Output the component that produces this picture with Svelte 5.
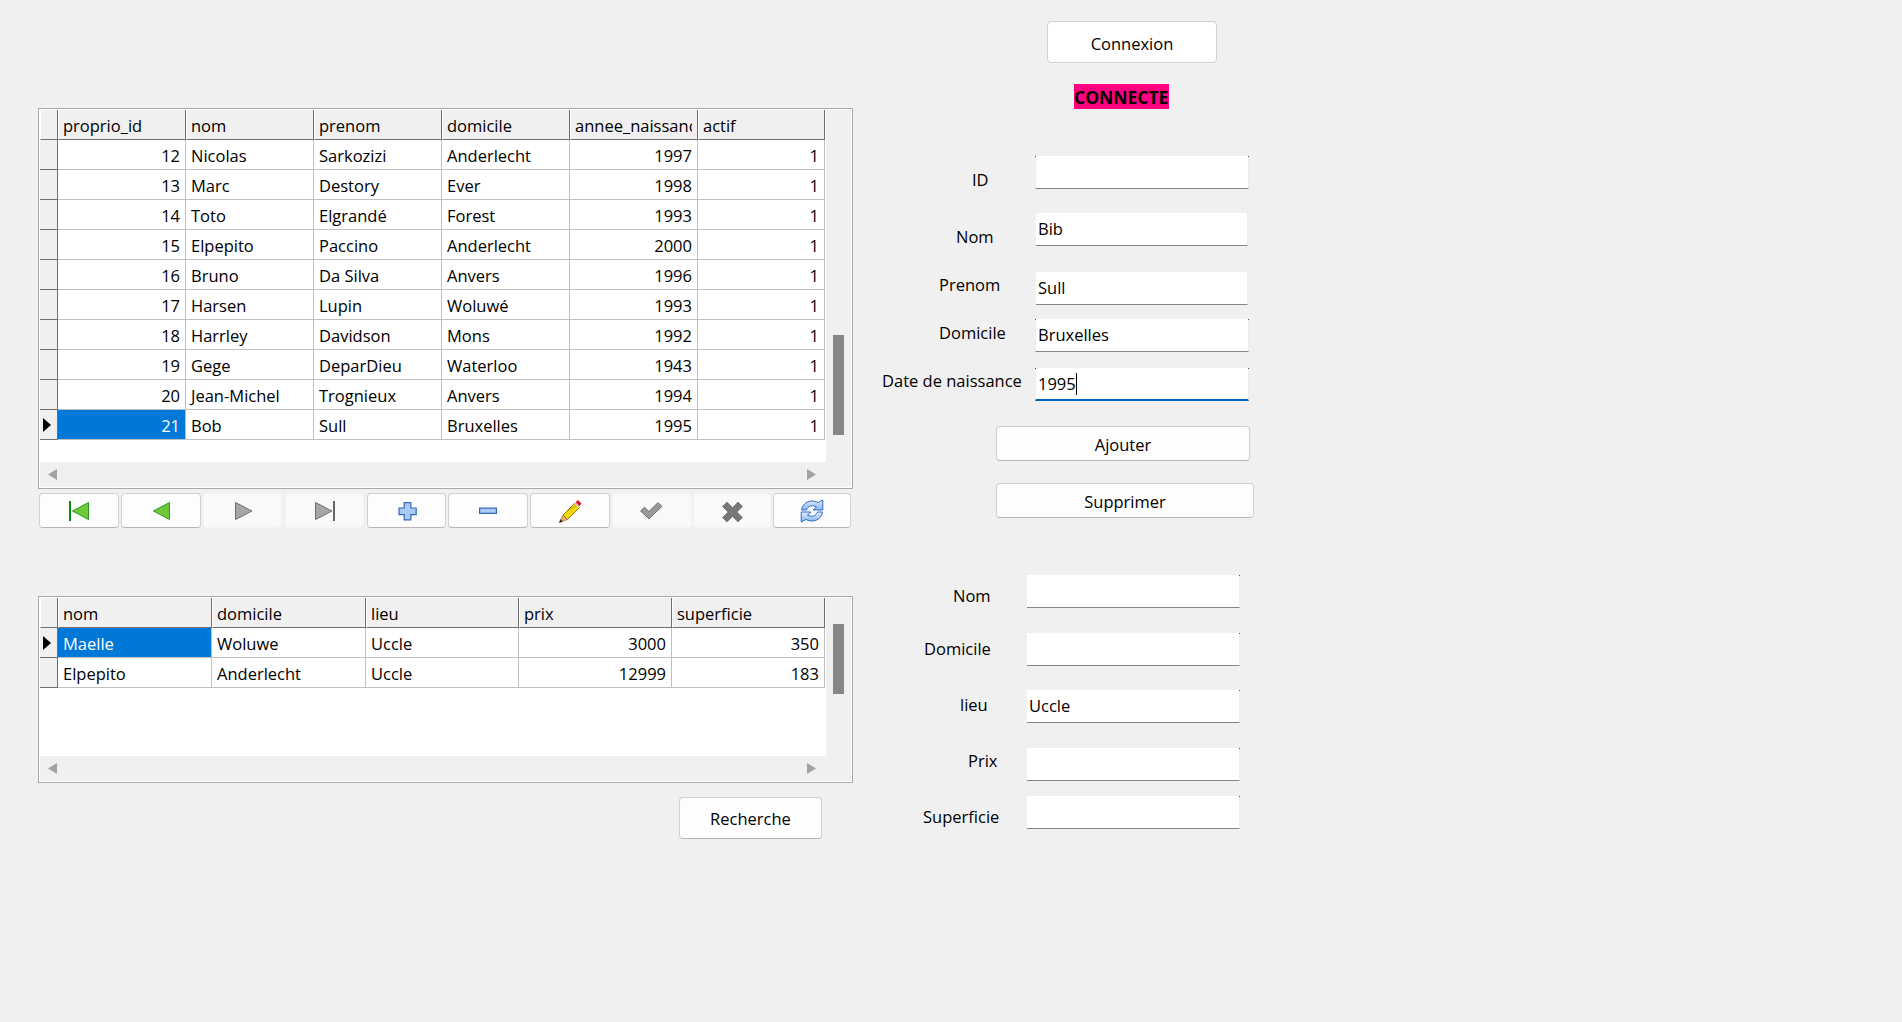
<script>
  const t1cols = [
    { name: 'proprio_id', num: true }, { name: 'nom' }, { name: 'prenom' }, { name: 'domicile' },
    { name: 'annee_naissance', num: true }, { name: 'actif', num: true }
  ];
  const t1rows = [
    [12,'Nicolas','Sarkozizi','Anderlecht',1997,1],
    [13,'Marc','Destory','Ever',1998,1],
    [14,'Toto','Elgrandé','Forest',1993,1],
    [15,'Elpepito','Paccino','Anderlecht',2000,1],
    [16,'Bruno','Da Silva','Anvers',1996,1],
    [17,'Harsen','Lupin','Woluwé',1993,1],
    [18,'Harrley','Davidson','Mons',1992,1],
    [19,'Gege','DeparDieu','Waterloo',1943,1],
    [20,'Jean-Michel','Trognieux','Anvers',1994,1],
    [21,'Bob','Sull','Bruxelles',1995,1]
  ];
  const t2cols = [
    { name: 'nom' }, { name: 'domicile' }, { name: 'lieu' }, { name: 'prix', num: true }, { name: 'superficie', num: true }
  ];
  const t2rows = [
    ['Maelle','Woluwe','Uccle',3000,350],
    ['Elpepito','Anderlecht','Uccle',12999,183]
  ];
  const tools = ['first','prev','next','last','add','remove','edit','ok','cancel','refresh'];
  const dim = new Set(['next','last','ok','cancel']);
  const form1 = [
    { key: 'id', label: 'ID', value: '' },
    { key: 'nom', label: 'Nom', value: 'Bib' },
    { key: 'prenom', label: 'Prenom', value: 'Sull' },
    { key: 'domicile', label: 'Domicile', value: 'Bruxelles' },
    { key: 'date', label: 'Date de naissance', value: '1995', focus: true }
  ];
  const form2 = [
    { key: 'nom2', label: 'Nom', value: '' },
    { key: 'dom2', label: 'Domicile', value: '' },
    { key: 'lieu', label: 'lieu', value: 'Uccle' },
    { key: 'prix', label: 'Prix', value: '' },
    { key: 'sup', label: 'Superficie', value: '' }
  ];
</script>

{#snippet arrowL()}<svg class="sa" viewBox="0 0 9 11"><path d="M9 0v11L0 5.500z" /></svg>{/snippet}
{#snippet arrowR()}<svg class="sa" viewBox="0 0 9 11"><path d="M0 0v11l9-5.500z" /></svg>{/snippet}

{#snippet grid(cols, rows, current, currentCol, cls)}
  <div class="frame {cls}">
    <div class="view">
      <table>
        <thead>
          <tr>
            <th class="corner"></th>
            {#each cols as c}<th><span class="clip">{c.name}</span></th>{/each}
          </tr>
        </thead>
        <tbody>
          {#each rows as r, i}
            <tr>
              <th class="rh">{#if i === current}<svg viewBox="0 0 8 14" class="cur"><path d="M0 0l8 7-8 7z" /></svg>{/if}</th>
              {#each r as v, j}
                <td class:num={cols[j].num} class:sel={i === current && j === currentCol}>{v}</td>
              {/each}
            </tr>
          {/each}
        </tbody>
      </table>
    </div>
    <div class="vbar"><div class="thumb"></div></div>
    <div class="hbar">{@render arrowL()}{@render arrowR()}</div>
  </div>
{/snippet}

{#snippet icon(n)}
  <svg viewBox="0 0 24 24" class="ti">
    {#if n === 'first'}
      <path d="M3 2v20" stroke="#0a8a0a" stroke-width="2" />
      <path d="M21.500 3.500v17L5.500 12z" fill="#6fc936" stroke="#2a9a1e" stroke-width="1" />
    {:else if n === 'prev'}
      <path d="M20.500 3.500v17L4.500 12z" fill="#6fc936" stroke="#2a9a1e" stroke-width="1" />
    {:else if n === 'next'}
      <path d="M4.500 3.500v17L21 12z" fill="#a6a6a6" stroke="#6e6e6e" stroke-width="1" />
    {:else if n === 'last'}
      <path d="M3.500 3.500v17L20 12z" fill="#a6a6a6" stroke="#6e6e6e" stroke-width="1" />
      <path d="M22 2v20" stroke="#666" stroke-width="2" />
    {:else if n === 'add'}
      <path d="M10.200 3.700h6.600v5.300h5.400v6.600h-5.400v5.300h-6.600v-5.300H5V9h5.200z" fill="#a9c9f7" stroke="#3a69b0" stroke-width="1.200" />
    {:else if n === 'remove'}
      <path d="M3.600 9.200h16.800v5.200H3.600z" fill="#a9c9f7" stroke="#3a69b0" stroke-width="1.200" />
    {:else if n === 'edit'}
      <path d="M5 16L17 4l4.500 4.500L9.500 20.500z" fill="#f5d90a" stroke="#8a6d10" stroke-width=".9" />
      <path d="M8 13l11.300-7" stroke="#c99a08" stroke-width="1" fill="none" />
      <path d="M5 16l4.500 4.500L1.500 23.500z" fill="#e8b060" stroke="#8a5a20" stroke-width=".6" />
      <path d="M1.200 23.800l1.100-3.600 2.500 2.400z" fill="#222" />
      <path d="M16.500 4.500l4.500 4.500 1.200-1.200-4.500-4.500z" fill="#d8d8d8" />
      <path d="M17.700 3.300l2.300-2.300 3.500 3.700-2.300 2.300z" fill="#e60d1c" />
    {:else if n === 'ok'}
      <path d="M.6 12l3.900-3.700 4.500 4.200 9-8.800 3.900 3.700L9 19.800z" fill="#9a9a9a" stroke="#6a6a6a" stroke-width="1" />
    {:else if n === 'cancel'}
      <path d="M7 3l5.500 5.500L18 3l4.500 4.500-5.500 5.500 5.500 5.500L18 23l-5.500-5.500L7 23l-4.500-4.500L8 13 2.500 7.500z" fill="#777" stroke="#666" stroke-width=".6" />
    {:else if n === 'refresh'}
      <defs>
        <linearGradient id="refreshFill" x1="0" y1="0" x2="0" y2="1">
          <stop offset="0" stop-color="#e2edfd" />
          <stop offset="1" stop-color="#86b4f4" />
        </linearGradient>
      </defs>
      <path d="M1.500 11C2.500 4 10-.5 18 3.500L22.800 1v10H13l3.500-3C12 5.500 8 7 6.500 11z" fill="url(#refreshFill)" stroke="#2f6cc8" stroke-width="1" />
      <path d="M22.500 13C21.500 20 14 24.500 6 20.500L1.200 23V13H11l-3.500 3c4.500 2.500 8.500 1 10-3z" fill="url(#refreshFill)" stroke="#2f6cc8" stroke-width="1" />
    {/if}
  </svg>
{/snippet}

{#snippet field(f)}
  <div class="row {f.key}">
    <span class="lab">{f.label}</span>
    <div class="input" class:focus={f.focus}>{f.value}{#if f.focus}<i class="caret"></i>{/if}</div>
  </div>
{/snippet}

<div class="page">
  <section class="left">
    {@render grid(t1cols, t1rows, 9, 0, 'g1')}
    <div class="tools">
      {#each tools as t}
        <button class="tool" class:dim={dim.has(t)} aria-label={t}>{@render icon(t)}</button>
      {/each}
    </div>
    {@render grid(t2cols, t2rows, 0, 0, 'g2')}
    <button class="btn search">Recherche</button>
  </section>

  <section class="right">
    <button class="btn connect">Connexion</button>
    <div class="status"><b>CONNECTE</b></div>
    <div class="form f1">
      {#each form1 as f}{@render field(f)}{/each}
    </div>
    <button class="btn ajout">Ajouter</button>
    <button class="btn suppr">Supprimer</button>
    <div class="form f2">
      {#each form2 as f}{@render field(f)}{/each}
    </div>
  </section>
</div>

<style>
  :global(body) { margin: 0; background: #f0f0f0; }
  .page {
    display: flex; width: 1902px; height: 1022px; overflow: hidden; background: #f0f0f0;
    font: 16.500px/22px "Open Sans", "Noto Sans", sans-serif; color: #000;
  }
  .left { width: 815px; margin-left: 38px; padding-top: 108px; display: flex; flex-direction: column; }
  .right { display: flex; flex-direction: column; align-items: flex-start; flex: 1; }

  /* data grids */
  .frame {
    position: relative; box-sizing: border-box; width: 815px; border: 1px solid #a9a9ad;
    outline: 1px solid #fff; outline-offset: -2px; background: #f0f0f0;
    display: grid; grid-template-columns: 786px 1fr; grid-template-rows: 1fr 25px; padding: 1px;
  }
  .g1 { height: 381px; }
  .g2 { height: 187px; margin-top: 68px; }
  .view { background: #fff; overflow: hidden; }
  table { border-collapse: separate; border-spacing: 0; table-layout: fixed; width: 785px; }
  thead th {
    height: 30px; padding: 2px 5px 0 4px; box-sizing: border-box; font-weight: 400; text-align: left;
    background: #f0f0f0; border-right: 1px solid #6e6e6e; border-bottom: 1px solid #6e6e6e;
    border-left: 1px solid #fff; white-space: nowrap; overflow: hidden;
  }
  .clip { display: block; overflow: hidden; white-space: nowrap; }
  th.corner { width: 18px; padding: 0; }
  .g1 thead th:not(.corner) { width: 128px; }
  .g1 thead th:last-child { width: 127px; }
  .g2 thead th:not(.corner) { width: 153px; }
  .g2 thead th:nth-child(2), .g2 thead th:nth-child(3) { width: 154px; }
  .rh { padding: 0; background: #f0f0f0; border-right: 1px solid #6e6e6e; border-bottom: 1px solid #6e6e6e; height: 30px; box-sizing: border-box; text-align: center; line-height: 0; }
  .cur { width: 8px; height: 14px; fill: #000; margin-right: 3px; }
  td { box-sizing: border-box; height: 30px; padding: 2px 5px 0; border-right: 1px solid #c0c0c0; border-bottom: 1px solid #c0c0c0; white-space: nowrap; overflow: hidden; }
  td.num { text-align: right; }
  td.sel { background: #0078d7; color: #fff; }
  .vbar { position: relative; }
  .thumb { position: absolute; left: 7px; width: 11px; background: #868686; }
  .g1 .thumb { top: 225px; height: 100px; }
  .g2 .thumb { top: 26px; height: 70px; }
  .hbar { display: flex; justify-content: space-between; align-items: center; padding: 0 10px 0 8px; }
  .sa { width: 9px; height: 11px; fill: #a2a2a2; }

  /* toolbar */
  .tools { display: flex; gap: 2.200px; margin-top: 4px; padding-left: 1px; width: 815px; height: 35px; box-sizing: border-box; }
  .tool {
    flex: none; width: 79.700px; padding: 0; display: flex; align-items: center; justify-content: center;
    background: #fdfdfd; border: 1px solid #d0d0d0; border-bottom-color: #b5b5b5; border-radius: 4px;
  }
  .tool:nth-child(9) { width: 77.500px; margin-left: -1px; }
  .tool:last-child { width: 78px; }
  .tool.dim { background: #f9f9f9; border-color: #f4f4f4; }
  .ti { width: 24px; height: 24px; }

  /* buttons */
  .btn {
    box-sizing: border-box; padding: 2px 0 0; font: inherit; color: #000; background: #fdfdfd;
    border: 1px solid #d0d0d0; border-bottom-color: #b5b5b5; border-radius: 4px;
  }
  .search { width: 143px; height: 42px; margin: 14px 0 0 641px; }
  .connect { width: 170px; height: 42px; margin: 21px 0 0 194px; padding-top: 4px; background: #fff; border-color: #cfcfcf; }
  .status { margin: 21px 0 0 221px; height: 25px; background: #ff0080; line-height: 27px; width: 95px; white-space: nowrap; font-size: 17.500px; }
  .ajout { width: 254px; height: 35px; margin: 25px 0 0 143px; }
  .suppr { width: 258px; height: 35px; margin: 22px 0 0 143px; }

  /* form */
  .form { display: flex; flex-direction: column; }
  .f1 { margin-top: 47px; }
  .f2 { margin-top: 57px; }
  .row { display: flex; align-items: flex-start; height: 33px; }
  .lab { white-space: nowrap; box-sizing: border-box; flex: none; }
  .f1 .lab { width: 182px; }
  .f2 .lab { width: 174px; }
  .input {
    position: relative; box-sizing: border-box; width: 214px; height: 33px; padding: 0 2px; background: #fff;
    border-bottom: 1px solid #858585; line-height: 31px; white-space: nowrap;
    border-left: 1px solid #ececec; border-right: 1px solid #ececec;
  }
  .f2 .input { width: 213px; border-left: 0; padding-left: 2px; }
  .nom .input, .prenom .input { width: 212px; margin-left: 1px; border-left: 0; padding-left: 2px; }
  .input.focus { border-bottom: 2px solid #0067c0; }
  .id .input::before, .domicile .input::before, .date .input::before,
  .id .input::after, .domicile .input::after, .date .input::after,
  .f2 .input::after {
    content: ""; position: absolute; top: 0; width: 1px; height: 1px; background: #555;
  }
  .input::before { left: -1px; }
  .input::after { right: -1px; }
  .caret { display: inline-block; width: 1px; height: 22px; background: #000; vertical-align: -5px; }

  .id .lab { padding: 13px 0 0 119px; }
  .nom { margin-top: 24px; }
  .nom .lab { padding: 13px 0 0 103px; }
  .prenom { margin-top: 26px; }
  .prenom .lab { padding: 2px 0 0 86px; }
  .domicile { margin-top: 14px; }
  .domicile .lab { padding: 3px 0 0 86px; }
  .date { margin-top: 16px; }
  .date .lab { padding: 2px 0 0 29px; }
  .nom2 .lab { padding: 10px 0 0 100px; }
  .dom2 { margin-top: 25px; }
  .dom2 .lab { padding: 5px 0 0 71px; }
  .lieu { margin-top: 24px; }
  .lieu .lab { padding: 4px 0 0 107px; }
  .prix { margin-top: 25px; }
  .prix .lab { padding: 2px 0 0 115px; }
  .sup { margin-top: 15px; }
  .sup .lab { padding: 10px 0 0 70px; }
</style>
